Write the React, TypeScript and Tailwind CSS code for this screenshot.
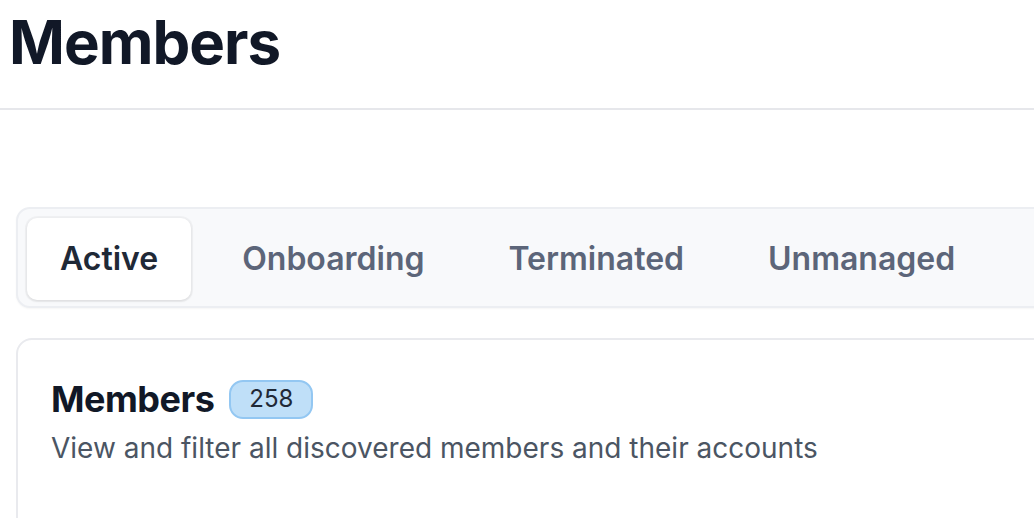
import { useState } from "react";

const tabs = ["Active", "Onboarding", "Terminated", "Unmanaged"];

export default function App() {
  const [active, setActive] = useState("Active");

  return (
    <div className="w-[1034px] h-[518px] overflow-hidden bg-white font-['Inter','Liberation_Sans',sans-serif]">
      {/* page header */}
      <header className="w-[1200px] pt-[12px] pb-[36px] pl-[9px] border-b-2 border-[#e6e7eb]">
        <h1 className="text-[60px] leading-[60px] font-bold tracking-[-1px] text-[#111827]">Members</h1>
      </header>

      <main className="w-[1200px] pl-[16px] pt-[97px]">
        {/* tabs */}
        <div className="flex gap-[18px] rounded-[14px] border-2 border-[#eceef2] bg-[#f8f9fb] pl-[9px] pt-[9px] pb-[6px] shadow-[0_1px_2px_rgba(0,0,0,0.04)]">
          {tabs.map((t) => {
            const isActive = t === active;
            return (
              <button
                key={t}
                onClick={() => setActive(t)}
                className={`h-[82px] px-[33px] rounded-[10px] text-[32px] font-semibold ${
                  isActive
                    ? "bg-white text-[#1f2937] shadow-[0_1px_3px_rgba(0,0,0,0.1),0_0_0_2px_rgba(0,0,0,0.03)]"
                    : "text-[#5c6579]"
                }`}
              >
                {t}
              </button>
            );
          })}
        </div>

        {/* members card */}
        <section className="mt-[30px] h-[300px] rounded-[16px] border-2 border-[#e9eaee] px-[33px] pt-[39px]">
          <div className="flex items-center gap-[15px] h-[40px]">
            <h2 className="text-[36px] leading-[40px] font-bold tracking-[-0.5px] text-[#111827]">Members</h2>
            <span className="h-[39px] px-[18px] flex items-center rounded-[14px] border-2 border-[#93c7f2] bg-[#bfdff8] text-[24px] text-[#1f2937]">
              258
            </span>
          </div>
          <p className="mt-[9px] text-[28px] leading-[40px] text-[#4b5563]">
            View and filter all discovered members and their accounts
          </p>
        </section>
      </main>
    </div>
  );
}
